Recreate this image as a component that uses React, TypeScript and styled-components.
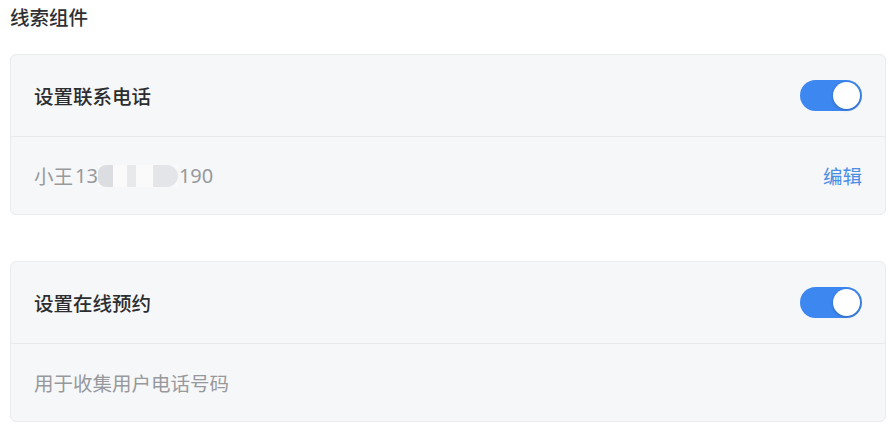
import React, { useState } from "react"
import styled, { createGlobalStyle } from "styled-components"

const GlobalStyle = createGlobalStyle`
    html, body {
        margin: 0;
        padding: 0;
        background: #fff;
    }
    * {
        box-sizing: border-box;
    }
`

const Page = styled.div`
    width: 896px;
    padding: 5px 10px 0;
    display: flex;
    flex-direction: column;
    font-family: "Noto Sans CJK SC", "Noto Sans", sans-serif;
`

const Title = styled.div`
    font-size: 19.5px;
    line-height: 24px;
    font-weight: 500;
    color: #2f3033;
    margin-bottom: 25px;
`

const Cards = styled.div`
    display: flex;
    flex-direction: column;
    gap: 46px;
`

const Card = styled.div`
    background: #f6f7f9;
    border: 1px solid #eaebee;
    border-radius: 6px;
`

const HeadRow = styled.div`
    height: 82px;
    display: flex;
    align-items: center;
    justify-content: space-between;
    padding: 0 23px;
    border-bottom: 1px solid #e8e9ec;
`

const HeadText = styled.div`
    font-size: 19.5px;
    font-weight: 500;
    color: #2c2d30;
`

const BodyRow = styled.div`
    height: 77px;
    display: flex;
    align-items: center;
    justify-content: space-between;
    padding: 0 23px;
`

const Muted = styled.div`
    font-size: 19.5px;
    color: #98999c;
    display: flex;
    align-items: center;
`

const Num = styled.span<{ $ml?: number }>`
    font-family: "Noto Sans", sans-serif;
    font-size: 20px;
    margin-left: ${(p) => p.$ml || 0}px;
`

const Mask = styled.span`
    display: inline-flex;
    align-items: center;
    height: 22px;
    background: #fafafb;
    filter: blur(0.7px);
`

const Blob = styled.span<{ $w: number; $ml: number; $tone: string; $round?: string }>`
    display: inline-block;
    width: ${(p) => p.$w}px;
    height: 22px;
    margin-left: ${(p) => p.$ml}px;
    background: ${(p) => p.$tone};
    border-radius: ${(p) => p.$round || "1px"};
`

const EditLink = styled.a`
    font-size: 19.5px;
    color: #4a8de4;
    text-decoration: none;
    cursor: pointer;
`

const Track = styled.button<{ $on: boolean }>`
    width: 62px;
    height: 31px;
    border: none;
    padding: 2px;
    border-radius: 16px;
    background: ${(p) => (p.$on ? "#3d87f0" : "#d5d7dc")};
    display: flex;
    justify-content: ${(p) => (p.$on ? "flex-end" : "flex-start")};
    align-items: center;
    cursor: pointer;
`

const Knob = styled.span`
    width: 27px;
    height: 27px;
    border-radius: 50%;
    background: #fff;
    box-shadow: 0 1px 3px rgba(0, 0, 0, 0.25);
`

const Toggle: React.FC = () => {
    const [on, setOn] = useState(true)
    return (
        <Track $on={on} onClick={() => setOn(!on)}>
            <Knob />
        </Track>
    )
}

const App: React.FC = () => {
    return (
        <Page>
            <GlobalStyle />
            <Title>线索组件</Title>
            <Cards>
                <Card>
                    <HeadRow>
                        <HeadText>设置联系电话</HeadText>
                        <Toggle />
                    </HeadRow>
                    <BodyRow>
                        <Muted>
                            小王<Num $ml={2}>13</Num>
                            <Mask>
                                <Blob $w={15} $ml={0} $tone="#dcdde0" $round="8px 1px 1px 8px" />
                                <Blob $w={9} $ml={14} $tone="#e8e9eb" />
                                <Blob $w={25} $ml={17} $tone="#e4e5e8" $round="1px 11px 11px 1px" />
                            </Mask>
                            <Num $ml={1}>190</Num>
                        </Muted>
                        <EditLink>编辑</EditLink>
                    </BodyRow>
                </Card>
                <Card>
                    <HeadRow>
                        <HeadText>设置在线预约</HeadText>
                        <Toggle />
                    </HeadRow>
                    <BodyRow>
                        <Muted>用于收集用户电话号码</Muted>
                    </BodyRow>
                </Card>
            </Cards>
        </Page>
    )
}

export default App
